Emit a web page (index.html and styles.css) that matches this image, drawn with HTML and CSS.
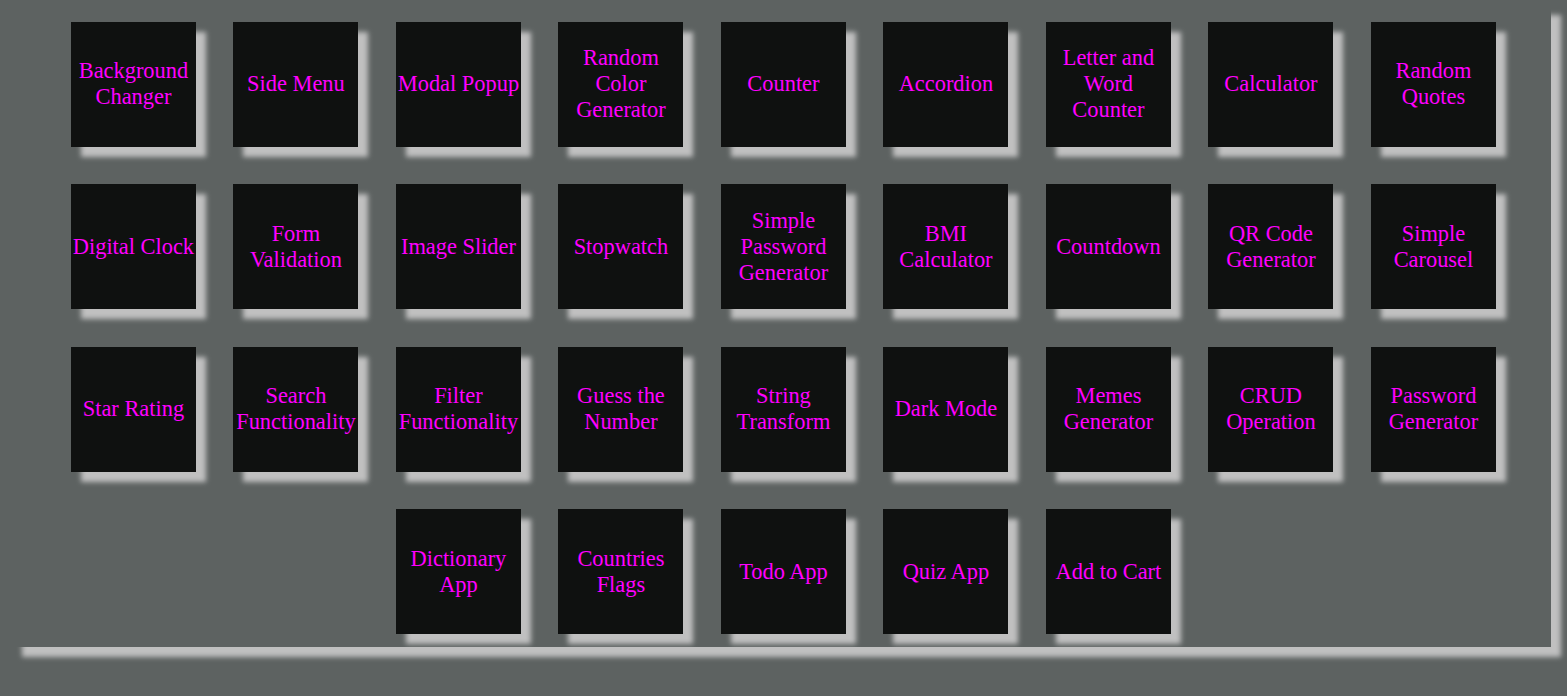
FILE: index.html
```html
<!DOCTYPE html>
<html>
<head>
<meta charset="utf-8">
<link rel="stylesheet" href="styles.css">
</head>
<body>
<div class="container">
  <div class="tile">Background Changer</div>
  <div class="tile">Side Menu</div>
  <div class="tile">Modal Popup</div>
  <div class="tile">Random Color Generator</div>
  <div class="tile">Counter</div>
  <div class="tile">Accordion</div>
  <div class="tile">Letter and Word Counter</div>
  <div class="tile">Calculator</div>
  <div class="tile">Random Quotes</div>
  <div class="tile">Digital Clock</div>
  <div class="tile">Form Validation</div>
  <div class="tile">Image Slider</div>
  <div class="tile">Stopwatch</div>
  <div class="tile">Simple Password Generator</div>
  <div class="tile">BMI Calculator</div>
  <div class="tile">Countdown</div>
  <div class="tile">QR Code Generator</div>
  <div class="tile">Simple Carousel</div>
  <div class="tile">Star Rating</div>
  <div class="tile">Search Functionality</div>
  <div class="tile">Filter Functionality</div>
  <div class="tile">Guess the Number</div>
  <div class="tile">String Transform</div>
  <div class="tile">Dark Mode</div>
  <div class="tile">Memes Generator</div>
  <div class="tile">CRUD Operation</div>
  <div class="tile">Password Generator</div>
  <div class="tile">Dictionary App</div>
  <div class="tile">Countries Flags</div>
  <div class="tile">Todo App</div>
  <div class="tile">Quiz App</div>
  <div class="tile">Add to Cart</div>
</div>
</body>
</html>
```

FILE: styles.css
```css
html, body {
  margin: 0;
  padding: 0;
  background: #5d6261;
  height: 100%;
  overflow: hidden;
}

body {
  font-family: "Liberation Serif", "Times New Roman", serif;
}

.container {
  box-sizing: border-box;
  margin: 5px 16px 0 12px;
  width: 1539px;
  height: 642px;
  padding: 16.9px 55px 0 58.9px;
  display: flex;
  flex-wrap: wrap;
  justify-content: center;
  align-content: flex-start;
  gap: 37.5px;
  box-shadow: 10px 10px 5px #c0c0c0;
}

.tile {
  box-sizing: border-box;
  width: 125px;
  height: 125px;
  background: #0f1110;
  color: #ff00ff;
  font-size: 22.4px;
  text-align: center;
  display: flex;
  align-items: center;
  justify-content: center;
  box-shadow: 10px 10px 5px #c0c0c0;
}
```
